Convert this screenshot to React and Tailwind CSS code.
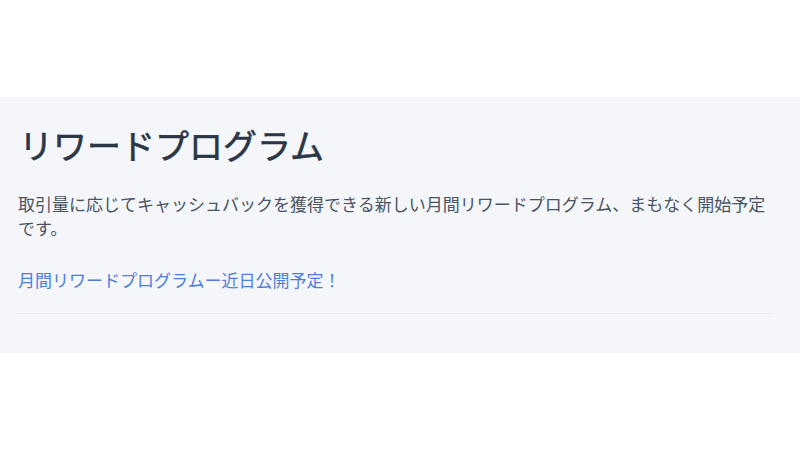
import React from 'react';

export default function App() {
  return (
    <div className="w-[800px] h-[450px] bg-white pt-[97px]" style={{ fontFamily: '"Noto Sans CJK JP", "Noto Sans", sans-serif' }}>
      <section className="bg-[#f4f6fa] h-[256px] px-[16px] pt-[24px]">
        <h1 className="text-[34px] leading-[48px] font-normal text-[#2b3646] [-webkit-text-stroke:0.6px_#2b3646] pl-[3px]">リワードプログラム</h1>
        <p className="mt-[23px] text-[17px] leading-[24px] text-[#4a5462] pl-[2px] w-[760px]">
          取引量に応じてキャッシュバックを獲得できる新しい月間リワードプログラム、まもなく開始予定です。
        </p>
        <a href="#" className="block mt-[28px] text-[17px] leading-[24px] text-[#4f7ddb] pl-[2px]">
          月間リワードプログラムー近日公開予定！
        </a>
        <div className="mt-[21px] w-[755px] border-t border-[#e8eaef]" />
      </section>
    </div>
  );
}
